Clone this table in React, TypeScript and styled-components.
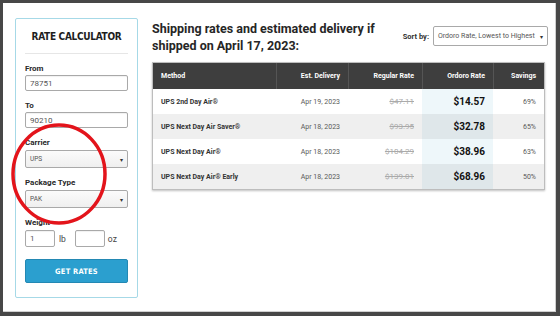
import React from "react";
import styled, { createGlobalStyle } from "styled-components";

const GlobalStyle = createGlobalStyle`
  html, body { margin: 0; padding: 0; background: #fff; }
  body { font-family: Roboto, "Liberation Sans", Arial, sans-serif; }
  * { box-sizing: border-box; }
`;

const Frame = styled.div`
  position: relative;
  width: 560px;
  height: 316px;
  border-style: solid;
  border-color: #474747;
  border-width: 3px 4px 4px 3px;
  box-shadow: inset -1px -1px 0 #cfcfcf;
  background: #fff;
  display: flex;
  align-items: flex-start;
  padding: 15px 10px 0 12px;
  gap: 14px;
  overflow: hidden;
`;

const Card = styled.div`
  width: 123px;
  flex: none;
  border: 1px solid #a6d9e7;
  border-radius: 2px;
  padding: 11px 9px 14px 9px;
  display: flex;
  flex-direction: column;
`;

const CardTitle = styled.div`
  font-family: "DejaVu Sans Condensed", "DejaVu Sans", sans-serif;
  font-weight: 700;
  font-size: 10px;
  line-height: 14px;
  text-align: center;
  white-space: nowrap;
  color: #1e1e1e;
  letter-spacing: -0.3px;
`;

const Divider = styled.div`
  height: 1px;
  background: #e6e6e6;
  margin: 9px 0 0;
`;

const Field = styled.div`
  margin-top: 10px;
  display: flex;
  flex-direction: column;
`;

const Label = styled.div<{ $gap?: number }>`
  font-size: 8px;
  font-weight: 700;
  line-height: 10px;
  color: #2a2a2a;
  margin-bottom: ${(p) => p.$gap ?? 1}px;
`;

const TextInput = styled.div<{ $w?: number; $h?: number }>`
  width: ${(p) => (p.$w ? `${p.$w}px` : "100%")};
  height: ${(p) => p.$h ?? 16}px;
  border: 1px solid #a9a9a9;
  border-radius: 2px;
  box-shadow: inset 0 1px 1px rgba(0, 0, 0, 0.06);
  font-size: 8px;
  color: #555;
  padding: 0 4px;
  display: flex;
  align-items: center;
  background: #fff;
`;

const Select = styled.div`
  height: 18px;
  border: 1px solid #a9a9a9;
  border-radius: 2px;
  background: linear-gradient(#fbfbfb, #efefef);
  font-size: 6.5px;
  color: #555;
  padding: 0 4px;
  display: flex;
  align-items: center;
  justify-content: space-between;
`;

const Caret = styled.span`
  font-size: 6px;
  color: #333;
`;

const WeightRow = styled.div`
  display: flex;
  align-items: center;
`;

const Unit = styled.span<{ $left: number; $right: number }>`
  font-size: 8.5px;
  color: #444;
  margin: 0 ${(p) => p.$right}px 0 ${(p) => p.$left}px;
`;

const Button = styled.div`
  margin-top: 12px;
  height: 24px;
  background: #2b9fcf;
  border: 1px solid #2388b3;
  border-radius: 2px;
  color: #fff;
  font-family: "DejaVu Sans Condensed", "DejaVu Sans", sans-serif;
  font-weight: 700;
  font-size: 7.5px;
  display: flex;
  align-items: center;
  justify-content: center;
  letter-spacing: 0.2px;
`;

const Main = styled.div`
  flex: 1;
  display: flex;
  flex-direction: column;
  padding-top: 2px;
`;

const TopRow = styled.div`
  display: flex;
  justify-content: space-between;
  align-items: flex-start;
`;

const Heading = styled.div`
  font-size: 12.5px;
  font-weight: 700;
  line-height: 17px;
  color: #262626;
  width: 240px;
`;

const SortBox = styled.div`
  display: flex;
  align-items: center;
  gap: 4px;
  margin-top: 6px;
  margin-right: -2px;
`;

const SortLabel = styled.span`
  font-size: 7.5px;
  font-weight: 700;
  color: #333;
`;

const SortSelect = styled.div`
  width: 115px;
  height: 20px;
  border: 1px solid #a9a9a9;
  border-radius: 2px;
  background: #fff;
  font-size: 7px;
  color: #555;
  display: flex;
  align-items: center;
  justify-content: space-between;
  padding: 0 4px 0 4px;
  white-space: nowrap;
`;

const Table = styled.div`
  margin-top: 8px;
  width: 393px;
  border: 1px solid #bdbdbd;
  box-shadow: 0 1px 2px rgba(0, 0, 0, 0.25);
  display: grid;
  grid-template-columns: 123px 72px 74px 71px 1fr;
`;

const HeadCell = styled.div<{ $left?: boolean }>`
  height: 26px;
  background: #3e3e3e;
  color: #fff;
  font-size: 7px;
  font-weight: 700;
  display: flex;
  align-items: center;
  justify-content: ${(p) => (p.$left ? "flex-start" : "flex-end")};
  padding: 0 8px;
  border-left: 1px solid #555;
  &:first-child { border-left: none; }
`;

const Cell = styled.div<{ $alt: boolean; $left?: boolean; $hi?: boolean }>`
  height: 25px;
  display: flex;
  align-items: center;
  justify-content: ${(p) => (p.$left ? "flex-start" : "flex-end")};
  padding: 0 8px;
  background: ${(p) =>
    p.$hi ? (p.$alt ? "#dfe7ea" : "#eef7fa") : p.$alt ? "#efefef" : "#fff"};
`;

const Method = styled.span`
  font-size: 7px;
  font-weight: 700;
  color: #333;
`;

const Plain = styled.span`
  font-size: 7px;
  color: #5a5a5a;
`;

const Struck = styled.span`
  font-size: 8px;
  color: #aaa;
  text-decoration: line-through;
`;

const Price = styled.span`
  font-size: 10px;
  font-weight: 700;
  color: #111;
`;

const Circle = styled.svg`
  position: absolute;
  left: 5px;
  top: 117px;
  pointer-events: none;
`;

const rates = [
  { method: "UPS 2nd Day Air®", date: "Apr 19, 2023", regular: "$47.11", ordoro: "$14.57", savings: "69%" },
  { method: "UPS Next Day Air Saver®", date: "Apr 18, 2023", regular: "$93.95", ordoro: "$32.78", savings: "65%" },
  { method: "UPS Next Day Air®", date: "Apr 18, 2023", regular: "$104.29", ordoro: "$38.96", savings: "63%" },
  { method: "UPS Next Day Air® Early", date: "Apr 18, 2023", regular: "$139.01", ordoro: "$68.96", savings: "50%" },
];

export default function App() {
  return (
    <>
      <GlobalStyle />
      <Frame>
        <Card>
          <CardTitle>RATE CALCULATOR</CardTitle>
          <Divider />
          <Field>
            <Label>From</Label>
            <TextInput>78751</TextInput>
          </Field>
          <Field>
            <Label>To</Label>
            <TextInput>90210</TextInput>
          </Field>
          <Field>
            <Label $gap={2}>Carrier</Label>
            <Select>
              UPS <Caret>▾</Caret>
            </Select>
          </Field>
          <Field>
            <Label $gap={2}>Package Type</Label>
            <Select>
              PAK <Caret>▾</Caret>
            </Select>
          </Field>
          <Field>
            <Label $gap={2}>Weight</Label>
            <WeightRow>
              <TextInput $w={30} $h={17}>1</TextInput>
              <Unit $left={4} $right={9}>lb</Unit>
              <TextInput $w={30} $h={17} />
              <Unit $left={3} $right={0}>oz</Unit>
            </WeightRow>
          </Field>
          <Button>GET RATES</Button>
        </Card>

        <Main>
          <TopRow>
            <Heading>
              Shipping rates and estimated delivery if shipped on April 17, 2023:
            </Heading>
            <SortBox>
              <SortLabel>Sort by:</SortLabel>
              <SortSelect>
                Ordoro Rate, Lowest to Highest <Caret>▾</Caret>
              </SortSelect>
            </SortBox>
          </TopRow>

          <Table>
            <HeadCell $left>Method</HeadCell>
            <HeadCell>Est. Delivery</HeadCell>
            <HeadCell>Regular Rate</HeadCell>
            <HeadCell>Ordoro Rate</HeadCell>
            <HeadCell>Savings</HeadCell>
            {rates.map((r, i) => {
              const alt = i % 2 === 1;
              return (
                <React.Fragment key={r.method}>
                  <Cell $alt={alt} $left>
                    <Method>{r.method}</Method>
                  </Cell>
                  <Cell $alt={alt}>
                    <Plain>{r.date}</Plain>
                  </Cell>
                  <Cell $alt={alt}>
                    <Struck>{r.regular}</Struck>
                  </Cell>
                  <Cell $alt={alt} $hi>
                    <Price>{r.ordoro}</Price>
                  </Cell>
                  <Cell $alt={alt}>
                    <Plain>{r.savings}</Plain>
                  </Cell>
                </React.Fragment>
              );
            })}
          </Table>
        </Main>

        <Circle width="104" height="110" viewBox="0 0 104 110">
          <ellipse cx="51" cy="54" rx="46" ry="49" fill="none" stroke="#e3141b" strokeWidth="3.5" />
        </Circle>
      </Frame>
    </>
  );
}
